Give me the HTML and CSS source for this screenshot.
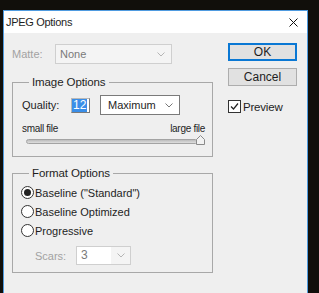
FILE: index.html
```html
<!DOCTYPE html>
<html lang="en">
<head>
    <meta charset="UTF-8">
    <title>JPEG Options</title>
    <link rel="stylesheet" href="styles.css">
</head>
<body>
    <div class="dialog">
        <div class="titlebar">
            <span class="title">JPEG Options</span>
            <svg class="close" width="9" height="9" viewBox="0 0 9 9">
                <path d="M0.5 0.5 L8.5 8.5 M8.5 0.5 L0.5 8.5" stroke="#111" stroke-width="1" fill="none"/>
            </svg>
        </div>

        <div class="content">
            <div class="main">
                <div class="matte-row">
                    <span class="label dim">Matte:</span>
                    <div class="select select-matte disabled">
                        <span>None</span>
                        <svg class="chevron" width="8" height="5" viewBox="0 0 8 5"><polyline points="0.5,0.5 4,4 7.5,0.5" fill="none" stroke="#b5b5b5"/></svg>
                    </div>
                </div>

                <fieldset class="group group-image">
                    <legend>Image Options</legend>
                    <div class="quality-row">
                        <span class="label">Quality:</span>
                        <div class="num-input"><span class="selected-text">12</span></div>
                        <div class="select select-quality">
                            <span>Maximum</span>
                            <svg class="chevron" width="8" height="5" viewBox="0 0 8 5"><polyline points="0.5,0.5 4,4 7.5,0.5" fill="none" stroke="#777"/></svg>
                        </div>
                    </div>
                    <div class="scale">
                        <span>small file</span>
                        <span>large file</span>
                    </div>
                    <div class="slider">
                        <div class="track"></div>
                        <svg class="thumb" width="9" height="10" viewBox="0 0 9 10">
                            <path d="M0.5 9.5 L0.5 4.5 L4.5 0.5 L8.5 4.5 L8.5 9.5 Z" fill="#f2f2f2" stroke="#8a8a8a"/>
                        </svg>
                    </div>
                </fieldset>

                <fieldset class="group group-format">
                    <legend>Format Options</legend>
                    <div class="radio-row"><span class="radio checked"></span>Baseline ("Standard")</div>
                    <div class="radio-row"><span class="radio"></span>Baseline Optimized</div>
                    <div class="radio-row"><span class="radio"></span>Progressive</div>
                    <div class="scans-row">
                        <span class="label dim">Scars:</span>
                        <div class="select select-scans disabled">
                            <span class="field">3</span>
                            <svg class="chevron" width="8" height="5" viewBox="0 0 8 5"><polyline points="0.5,0.5 4,4 7.5,0.5" fill="none" stroke="#b5b5b5"/></svg>
                        </div>
                    </div>
                </fieldset>
            </div>

            <div class="side">
                <button class="btn btn-default">OK</button>
                <button class="btn">Cancel</button>
                <div class="check-row">
                    <span class="checkbox">
                        <svg width="11" height="11" viewBox="0 0 11 11"><polyline points="2,5.5 4.5,8 9,2.5" fill="none" stroke="#222" stroke-width="1.2"/></svg>
                    </span>
                    Preview
                </div>
            </div>
        </div>
    </div>
</body>
</html>
```

FILE: styles.css
```css
* {
    box-sizing: border-box;
}

body {
    margin: 0;
    height: 293px;
    overflow: hidden;
    background-color: #110f0b;
    font-family: "Liberation Sans", Arial, sans-serif;
    font-size: 11px;
    color: #1e1e1e;
}

.dialog {
    margin: 10px 0 0 3px;
    width: 305px;
    height: 283px;
    border: 1px solid #4f9be0;
    border-bottom: none;
    background-color: #efefef;
}

.titlebar {
    height: 22px;
    background: #fff;
    display: flex;
    align-items: center;
    justify-content: space-between;
    padding: 0 9px 0 2px;
}

.title {
    font-size: 11px;
    letter-spacing: -0.3px;
}

.content {
    display: flex;
}

.main {
    width: 209px;
    padding-left: 8px;
}

.label {
    white-space: nowrap;
}

.dim {
    color: #a2a2a2;
}

/* combo boxes */
.select {
    display: flex;
    align-items: center;
    justify-content: space-between;
    background: #fff;
    border: 1px solid #7a7a7a;
    padding: 0 6px 0 7px;
}

.select.disabled {
    background: #f4f4f4;
    border-color: #cfcfcf;
    color: #7a7a7a;
}

.matte-row {
    display: flex;
    align-items: center;
    margin-top: 11px;
    height: 20px;
}

.matte-row .label {
    width: 43px;
}

.select-matte {
    width: 117px;
    height: 20px;
    padding-left: 4px;
}

/* group boxes */
.group {
    margin: 0;
    width: 201px;
    border: 1px solid #a8a8a8;
    padding: 0 7px 0 9px;
}

.group legend {
    margin-left: 7px;
    padding: 0 3px;
    line-height: 14px;
    font-size: 11.5px;
    letter-spacing: -0.1px;
}

.group-image {
    margin-top: 11px;
    padding-bottom: 11px;
}

.quality-row {
    display: flex;
    align-items: center;
    margin-top: 6px;
    height: 20px;
}

.quality-row .label {
    width: 49px;
}

.num-input {
    width: 19px;
    height: 15px;
    background: #fff;
    border: 1px solid #7a7a7a;
    border-left-color: #b8b8b8;
    border-top-color: #b8b8b8;
    display: flex;
    align-items: center;
}

.selected-text {
    background: #3a8ee8;
    color: #fff;
    line-height: 13px;
    padding: 0 1px;
    font-size: 12px;
}

.select-quality {
    margin-left: 10px;
    width: 80px;
    height: 20px;
}

.scale {
    display: flex;
    justify-content: space-between;
    margin-top: 7px;
    line-height: 13px;
    font-size: 10px;
    letter-spacing: -0.3px;
}

.slider {
    display: flex;
    align-items: flex-end;
    height: 10px;
    padding-left: 4px;
}

.track {
    flex: 1;
    height: 5px;
    margin-bottom: 1px;
    margin-right: -2px;
    border: 1px solid #a3a3a3;
    border-radius: 3px;
    background: linear-gradient(#bcbcbc, #dedede);
}

.thumb {
    display: block;
    position: relative;
}

.group-format {
    margin-top: 9px;
    padding-top: 3px;
    padding-bottom: 7px;
}

.radio-row {
    display: flex;
    align-items: center;
    height: 19px;
    font-size: 11px;
    white-space: nowrap;
}

.radio {
    width: 13px;
    height: 13px;
    margin-left: -1px;
    margin-right: 1px;
    border: 1px solid #333;
    border-radius: 50%;
    background: #fff;
    display: flex;
    align-items: center;
    justify-content: center;
}

.radio.checked::after {
    content: "";
    width: 7px;
    height: 7px;
    border-radius: 50%;
    background: #222;
}

.scans-row {
    display: flex;
    align-items: center;
    margin-top: 6px;
    padding-left: 13px;
}

.scans-row .label {
    width: 41px;
}

.select-scans {
    width: 55px;
    height: 19px;
    padding: 0 5px 0 0;
}

.select-scans .field {
    align-self: stretch;
    width: 34px;
    background: #fff;
    padding-left: 4px;
    line-height: 17px;
    font-size: 12px;
}

/* right column */
.side {
    margin-left: 15px;
    padding-top: 10px;
    display: flex;
    flex-direction: column;
}

.btn {
    width: 69px;
    height: 18px;
    padding: 0;
    background: #e1e1e1;
    border: 1px solid #adadad;
    font-family: inherit;
    font-size: 12px;
    color: #1e1e1e;
}

.btn + .btn {
    margin-top: 7px;
}

.btn-default {
    border: 2px solid #0a78d4;
}

.check-row {
    display: flex;
    align-items: center;
    margin-top: 14px;
    font-size: 11.5px;
    letter-spacing: -0.2px;
}

.checkbox {
    width: 13px;
    height: 13px;
    margin-right: 2px;
    border: 1px solid #333;
    background: #fff;
    display: flex;
    align-items: center;
    justify-content: center;
}
```
